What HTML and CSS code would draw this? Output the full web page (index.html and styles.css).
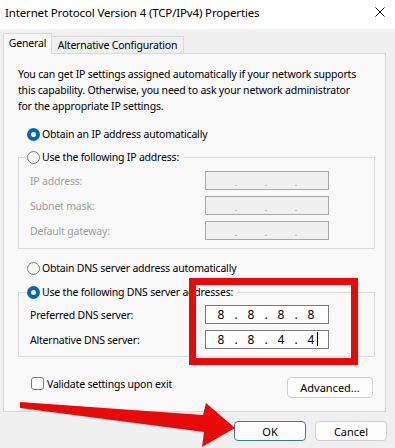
FILE: index.html
```html
<!DOCTYPE html>
<html lang="en">
<head>
<meta charset="UTF-8">
<meta name="viewport" content="width=device-width, initial-scale=1.0">
<title>Internet Protocol Version 4 (TCP/IPv4) Properties</title>
<link rel="stylesheet" href="styles.css">
</head>
<body>
<div class="dialog">
    <div class="titlebar">
        <span class="title">Internet Protocol Version 4 (TCP/IPv4) Properties</span>
        <svg class="close" width="10" height="10" viewBox="0 0 10 10">
            <path d="M0.5 0.5L9.5 9.5M9.5 0.5L0.5 9.5" stroke="#111" stroke-width="1"/>
        </svg>
    </div>

    <div class="tabs">
        <div class="tab active">General</div>
        <div class="tab other">Alternative Configuration</div>
    </div>

    <div class="panel">
        <p class="intro">You can get IP settings assigned automatically if your network supports<br>this capability. Otherwise, you need to ask your network administrator<br>for the appropriate IP settings.</p>

        <div class="radio-row ip-auto"><span class="radio checked"></span>Obtain an IP address automatically</div>
        <fieldset class="group ip-group">
            <legend><span class="radio-row"><span class="radio"></span>Use the following IP address:</span></legend>
            <div class="field disabled">
                <span class="field-label">IP address:</span>
                <div class="ipbox"><span class="oct"></span><span class="dot">.</span><span class="oct"></span><span class="dot">.</span><span class="oct"></span><span class="dot">.</span><span class="oct"></span></div>
            </div>
            <div class="field disabled">
                <span class="field-label">Subnet mask:</span>
                <div class="ipbox"><span class="oct"></span><span class="dot">.</span><span class="oct"></span><span class="dot">.</span><span class="oct"></span><span class="dot">.</span><span class="oct"></span></div>
            </div>
            <div class="field disabled">
                <span class="field-label">Default gateway:</span>
                <div class="ipbox"><span class="oct"></span><span class="dot">.</span><span class="oct"></span><span class="dot">.</span><span class="oct"></span><span class="dot">.</span><span class="oct"></span></div>
            </div>
        </fieldset>

        <div class="radio-row dns-auto"><span class="radio"></span>Obtain DNS server address automatically</div>
        <fieldset class="group dns-group">
            <legend><span class="radio-row"><span class="radio checked"></span>Use the following DNS server addresses:</span></legend>
            <div class="field">
                <span class="field-label">Preferred DNS server:</span>
                <div class="ipbox"><span class="oct">8</span><span class="dot">.</span><span class="oct">8</span><span class="dot">.</span><span class="oct">8</span><span class="dot">.</span><span class="oct">8</span></div>
            </div>
            <div class="field">
                <span class="field-label">Alternative DNS server:</span>
                <div class="ipbox"><span class="oct">8</span><span class="dot">.</span><span class="oct">8</span><span class="dot">.</span><span class="oct">4</span><span class="dot">.</span><span class="oct">4<span class="caret"></span></span></div>
            </div>
        </fieldset>

        <div class="panel-bottom">
            <div class="check-row"><span class="checkbox"></span>Validate settings upon exit</div>
            <button class="btn advanced">Advanced...</button>
        </div>
    </div>

    <div class="actions">
        <button class="btn default">OK</button>
        <button class="btn">Cancel</button>
    </div>

    <!-- annotations drawn over the dialog -->
    <div class="highlight"></div>
    <svg class="arrow" width="395" height="448" viewBox="0 0 395 448">
        <polygon points="20,402 203,415 206,403 235,428 202,447 204,432 20,408" fill="#e60a0a"/>
    </svg>
</div>
</body>
</html>
```

FILE: styles.css
```css
body {
    margin: 0;
    font-family: "Noto Sans", "Open Sans", sans-serif;
    font-size: 10.5px;
    letter-spacing: -0.2px;
    color: #000;
}

.dialog {
    position: relative;
    width: 395px;
    height: 448px;
    background-color: #f0f0f0;
    overflow: hidden;
    white-space: nowrap;
}

.titlebar {
    height: 29px;
    background-color: #fff;
    display: flex;
    align-items: flex-start;
    justify-content: space-between;
    padding: 5px 10px 0 5px;
    box-sizing: border-box;
}

.title {
    font-size: 11.5px;
    letter-spacing: -0.15px;
    line-height: 16px;
}

.close {
    margin-top: 2px;
}

/* tabs */
.tabs {
    display: flex;
    align-items: flex-end;
    height: 20px;
    margin-top: 4px;
    padding-left: 3px;
}

.tab {
    box-sizing: border-box;
    border: 1px solid #d9d9d9;
    border-bottom: none;
    text-align: center;
}

.tab.active {
    position: relative;
    z-index: 1;
    width: 49px;
    height: 21px;
    line-height: 19px;
    margin-bottom: -1px;
    background-color: #f9f9f9;
}

.tab.other {
    width: 132px;
    height: 17px;
    line-height: 16px;
    border-left: none;
}

/* panel */
.panel {
    box-sizing: border-box;
    height: 359px;
    margin: 0 9px 0 3px;
    padding: 12px 10px 0 14px;
    border: 1px solid #d9d9d9;
    background-color: #f9f9f9;
}

.intro {
    margin: 0;
    line-height: 16px;
}

.radio-row {
    display: flex;
    align-items: center;
    height: 16px;
    gap: 2px;
}

.ip-auto {
    margin: 12px 0 0 9px;
}

.dns-auto {
    margin: 11px 0 0 9px;
}

.radio {
    width: 13px;
    height: 13px;
    box-sizing: border-box;
    border: 1px solid #7a7a7a;
    border-radius: 50%;
    background-color: #fff;
}

.radio.checked {
    border: 4px solid #0067c0;
    background-color: #fff;
}

.group {
    margin: 0;
    padding: 0;
    border: 1px solid #dcdcdc;
}

.ip-group {
    margin-top: 7px;
    padding: 6px 0 8px 0;
}

.dns-group {
    margin-top: 8px;
    padding: 5px 0 7px 0;
}

legend {
    margin-left: 7px;
    padding: 0 4px 0 1px;
}

.field {
    display: flex;
    align-items: center;
    height: 19px;
    margin-left: 11px;
}

.field + .field {
    margin-top: 6px;
}

.field-label {
    width: 175px;
}

.ipbox {
    box-sizing: border-box;
    width: 124px;
    height: 19px;
    padding-left: 5px;
    display: flex;
    align-items: center;
    border: 1px solid #7a7a7a;
    background-color: #fff;
    font-size: 12px;
    letter-spacing: 0;
}

.oct {
    position: relative;
    width: 20px;
    text-align: center;
}

.dot {
    width: 10px;
    text-align: center;
}

.caret {
    position: absolute;
    top: 1px;
    right: 3px;
    width: 1px;
    height: 14px;
    background-color: #000;
}

.disabled .field-label {
    color: #9d9d9d;
}

.disabled .ipbox {
    border-color: #a8a8a8;
    background-color: #f0f0f0;
    color: #8a8a8a;
    font-size: 9px;
}

.disabled .dot {
    padding-top: 4px;
}

.panel-bottom {
    display: flex;
    justify-content: space-between;
    align-items: flex-start;
    margin-top: 20px;
    padding-right: 2px;
}

.check-row {
    display: flex;
    align-items: center;
    gap: 3px;
    height: 13px;
    margin-left: 13px;
}

.checkbox {
    width: 13px;
    height: 13px;
    box-sizing: border-box;
    border: 1px solid #7a7a7a;
    border-radius: 3px;
    background-color: #fff;
}

.btn {
    box-sizing: border-box;
    height: 21px;
    padding: 0;
    border: 1px solid #d0d0d0;
    border-radius: 4px;
    background-color: #fdfdfd;
    font-family: inherit;
    font-size: 11px;
    letter-spacing: 0;
    color: #000;
}

.advanced {
    width: 86px;
}

.actions {
    display: flex;
    justify-content: flex-end;
    gap: 9px;
    padding: 9px 8px 0 0;
}

.actions .btn {
    width: 72px;
    height: 20px;
}

.btn.default {
    border-color: #3f78a6;
}

/* red annotations */
.highlight {
    position: absolute;
    left: 189px;
    top: 278px;
    width: 169px;
    height: 87px;
    box-sizing: border-box;
    border: 7px solid #e60a0a;
}

.arrow {
    position: absolute;
    left: 0;
    top: 0;
}
```
